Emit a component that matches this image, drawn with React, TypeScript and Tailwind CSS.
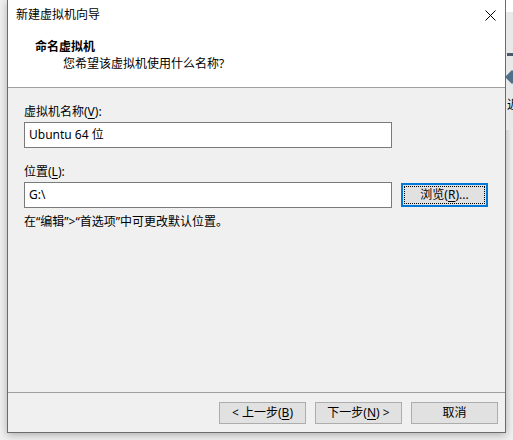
import React from 'react';

const font = { fontFamily: '"Noto Sans", "Noto Sans CJK SC", sans-serif' };

function Key({ k }: { k: string }) {
  return <span className="underline underline-offset-2">{k}</span>;
}

function Button({ children, className = '' }: { children: React.ReactNode; className?: string }) {
  return (
    <div
      className={
        'w-[87px] h-[22px] flex items-center justify-center bg-[#e1e1e1] border border-[#adadad] text-[12px] text-black ' +
        className
      }
    >
      {children}
    </div>
  );
}

export default function App() {
  return (
    <div className="w-[513px] h-[440px] bg-[#f0f0f0] flex overflow-hidden" style={font}>
      <div className="w-[7px]" />
      <div className="w-[499px] h-[433px] flex flex-col border border-t-0 border-[#6b6b6b] bg-[#f0f0f0] shadow-[0_2px_8px_rgba(0,0,0,0.28)] text-[12px] leading-[16px] text-black">
        {/* header */}
        <div className="bg-white h-[87px] flex flex-col border-b border-[#a0a0a0] box-content">
          <div className="h-[30px] flex items-center justify-between pl-[8px] pr-[9px]">
            <span>新建虚拟机向导</span>
            <svg width="11" height="11" viewBox="0 0 11 11">
              <path d="M0.5 0.5 L10.5 10.5 M10.5 0.5 L0.5 10.5" stroke="#000" strokeWidth="1" />
            </svg>
          </div>
          <div className="mt-[9px] pl-[27px] font-bold">命名虚拟机</div>
          <div className="mt-[1px] pl-[55px]">您希望该虚拟机使用什么名称?</div>
        </div>

        {/* body */}
        <div className="flex-1 flex flex-col pl-[16px] pt-[16px]">
          <div>
            虚拟机名称(<Key k="V" />):
          </div>
          <div className="mt-[2px] w-[368px] h-[26px] bg-white border border-[#7a7a7a] flex items-center pl-[4px]">
            Ubuntu 64 位
          </div>
          <div className="mt-[16px]">
            位置(<Key k="L" />):
          </div>
          <div className="mt-[2px] flex items-center gap-[9px]">
            <div className="w-[368px] h-[26px] bg-white border border-[#7a7a7a] flex items-center pl-[4px]">G:\</div>
            <div className="w-[87px] h-[24px] border-2 border-[#0078d7] bg-[#e1e1e1] p-[1px]">
              <div className="w-full h-full border border-dotted border-black flex items-center justify-center">
                浏览(<Key k="R" />)...
              </div>
            </div>
          </div>
          <div className="mt-[6px]">在“编辑”&gt;“首选项”中可更改默认位置。</div>
        </div>

        {/* footer */}
        <div className="h-[40px] border-t border-[#a0a0a0] flex items-start justify-end gap-[9px] pt-[9px] pr-[7px]">
          <Button>
            &lt; 上一步(<Key k="B" />)
          </Button>
          <Button>
            下一步(<Key k="N" />) &gt;
          </Button>
          <Button>取消</Button>
        </div>
      </div>

      {/* window behind, right edge */}
      <div className="w-[7px] flex flex-col">
        <div className="h-[12px] bg-white" />
        <div className="h-[118px] bg-[#e9e9e9] flex flex-col pl-[1px] overflow-hidden">
          <div className="mt-[41px] h-[3px] w-[8px] bg-[#4a5a6a]" />
          <div className="mt-[16px] w-[10px] h-[10px] bg-[#4f6f8a] rotate-45" />
          <div className="mt-[15px] text-[12px] leading-[16px] whitespace-nowrap">近</div>
        </div>
      </div>
    </div>
  );
}
